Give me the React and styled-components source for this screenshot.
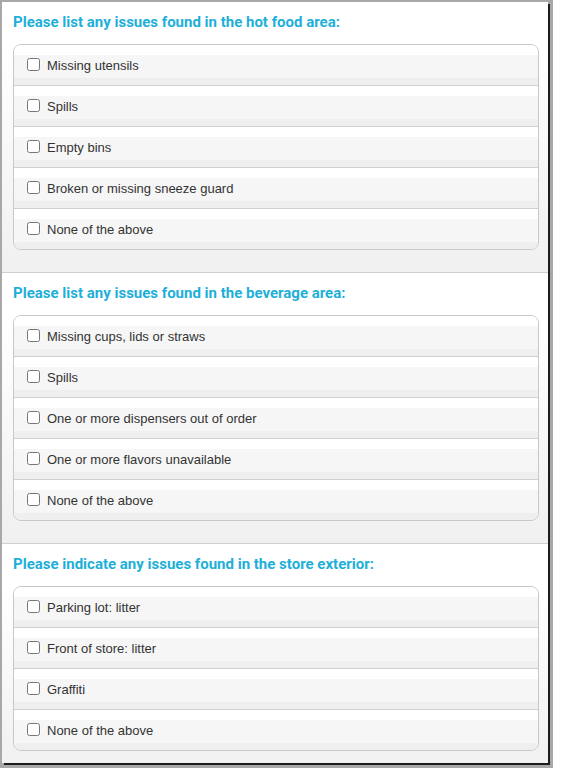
import React from "react";
import styled, { createGlobalStyle } from "styled-components";

const GlobalStyle = createGlobalStyle`
  body {
    margin: 0;
    background: #ffffff;
    font-family: "Liberation Sans", Arial, sans-serif;
  }
`;

const Frame = styled.div`
  display: inline-block;
  background: #a8a8a8;
  padding: 2px 5px 5px 2px;
`;

const Card = styled.div`
  width: 546px;
  height: 761px;
  overflow: hidden;
  background: #ffffff;
  box-shadow: 2px 2px 0 #1c1c1c;
`;

const Section = styled.section`
  padding: 11px 9px 22px 11px;
  border-bottom: 1px solid #cfcfcf;
  background: linear-gradient(to bottom, #ffffff 0, #ffffff 50px, #f0f0f0 100%);
`;

const Heading = styled.h2`
  margin: 0 0 13px 0;
  font-family: Roboto, "Liberation Sans", sans-serif;
  font-size: 15px;
  line-height: 18px;
  font-weight: 700;
  color: #1eafd9;
`;

const List = styled.div`
  border: 1px solid #c8c8c8;
  border-radius: 8px;
  overflow: hidden;
  background: #ffffff;
`;

const Row = styled.label`
  display: flex;
  align-items: center;
  height: 40px;
  padding: 0 13px;
  gap: 7px;
  background: linear-gradient(
    to bottom,
    #ffffff 0,
    #ffffff 10px,
    #f6f6f6 10px,
    #f6f6f6 33px,
    #efefef 33px,
    #efefef 100%
  );
  font-size: 13px;
  color: #333333;
  cursor: pointer;

  & + & {
    border-top: 1px solid #d0d0d0;
  }
`;

const Check = styled.input`
  width: 13px;
  height: 13px;
  margin: 0 0 2px 0;
`;

const sections = [
  {
    title: "Please list any issues found in the hot food area:",
    items: [
      "Missing utensils",
      "Spills",
      "Empty bins",
      "Broken or missing sneeze guard",
      "None of the above",
    ],
  },
  {
    title: "Please list any issues found in the beverage area:",
    items: [
      "Missing cups, lids or straws",
      "Spills",
      "One or more dispensers out of order",
      "One or more flavors unavailable",
      "None of the above",
    ],
  },
  {
    title: "Please indicate any issues found in the store exterior:",
    items: [
      "Parking lot: litter",
      "Front of store: litter",
      "Graffiti",
      "None of the above",
    ],
  },
];

const App = () => {
  return (
    <>
      <GlobalStyle />
      <Frame>
        <Card>
          {sections.map((s, i) => (
            <Section key={i}>
              <Heading>{s.title}</Heading>
              <List>
                {s.items.map((item, j) => (
                  <Row key={j}>
                    <Check type="checkbox" />
                    {item}
                  </Row>
                ))}
              </List>
            </Section>
          ))}
        </Card>
      </Frame>
    </>
  );
};

export default App;
